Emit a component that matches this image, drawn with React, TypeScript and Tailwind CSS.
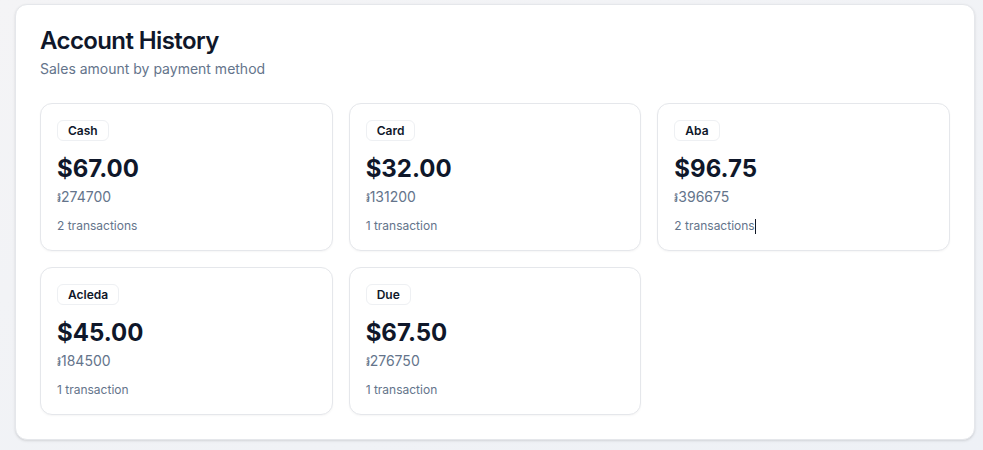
import React from "react";

const items = [
  { name: "Cash", usd: "$67.00", riel: "274700", tx: "2 transactions" },
  { name: "Card", usd: "$32.00", riel: "131200", tx: "1 transaction" },
  { name: "Aba", usd: "$96.75", riel: "396675", tx: "2 transactions", cursor: true },
  { name: "Acleda", usd: "$45.00", riel: "184500", tx: "1 transaction" },
  { name: "Due", usd: "$67.50", riel: "276750", tx: "1 transaction" },
];

export default function App() {
  return (
    <div
      className="min-h-[450px] w-full bg-gradient-to-br from-[#f4f4f6] to-[#eef1f6] pl-[15px] pr-2 pt-1 pb-2"
      style={{ fontFamily: "Inter, 'Noto Sans', sans-serif" }}
    >
      <div className="rounded-xl border border-[#e5e7eb] bg-white shadow-sm">
        <div className="flex flex-col p-6">
          <h1 className="text-2xl font-semibold leading-none tracking-tight text-[#0f172a]">
            Account History
          </h1>
          <p className="mt-1.5 text-sm text-[#64748b]">Sales amount by payment method</p>
        </div>
        <div className="grid grid-cols-3 gap-4 px-6 pb-6">
          {items.map((it) => (
            <div
              key={it.name}
              className="flex flex-col items-start rounded-xl border border-[#e5e7eb] bg-white p-4 shadow-[0_1px_2px_rgba(0,0,0,0.04)]"
            >
              <span className="flex h-[21px] items-center rounded-md border border-[#eef0f3] px-2.5 text-xs font-semibold text-[#0f172a]">
                {it.name}
              </span>
              <div className="mt-3 text-2xl font-bold text-[#0f172a]">{it.usd}</div>
              <div className="mt-0.5 text-sm text-[#64748b]">៛{it.riel}</div>
              <div className="relative mt-[11px] text-xs text-[#64748b]">
                {it.tx}
                {it.cursor && (
                  <span className="absolute -right-[1px] top-[1px] h-[15px] w-px bg-[#111827]" />
                )}
              </div>
            </div>
          ))}
        </div>
      </div>
    </div>
  );
}
